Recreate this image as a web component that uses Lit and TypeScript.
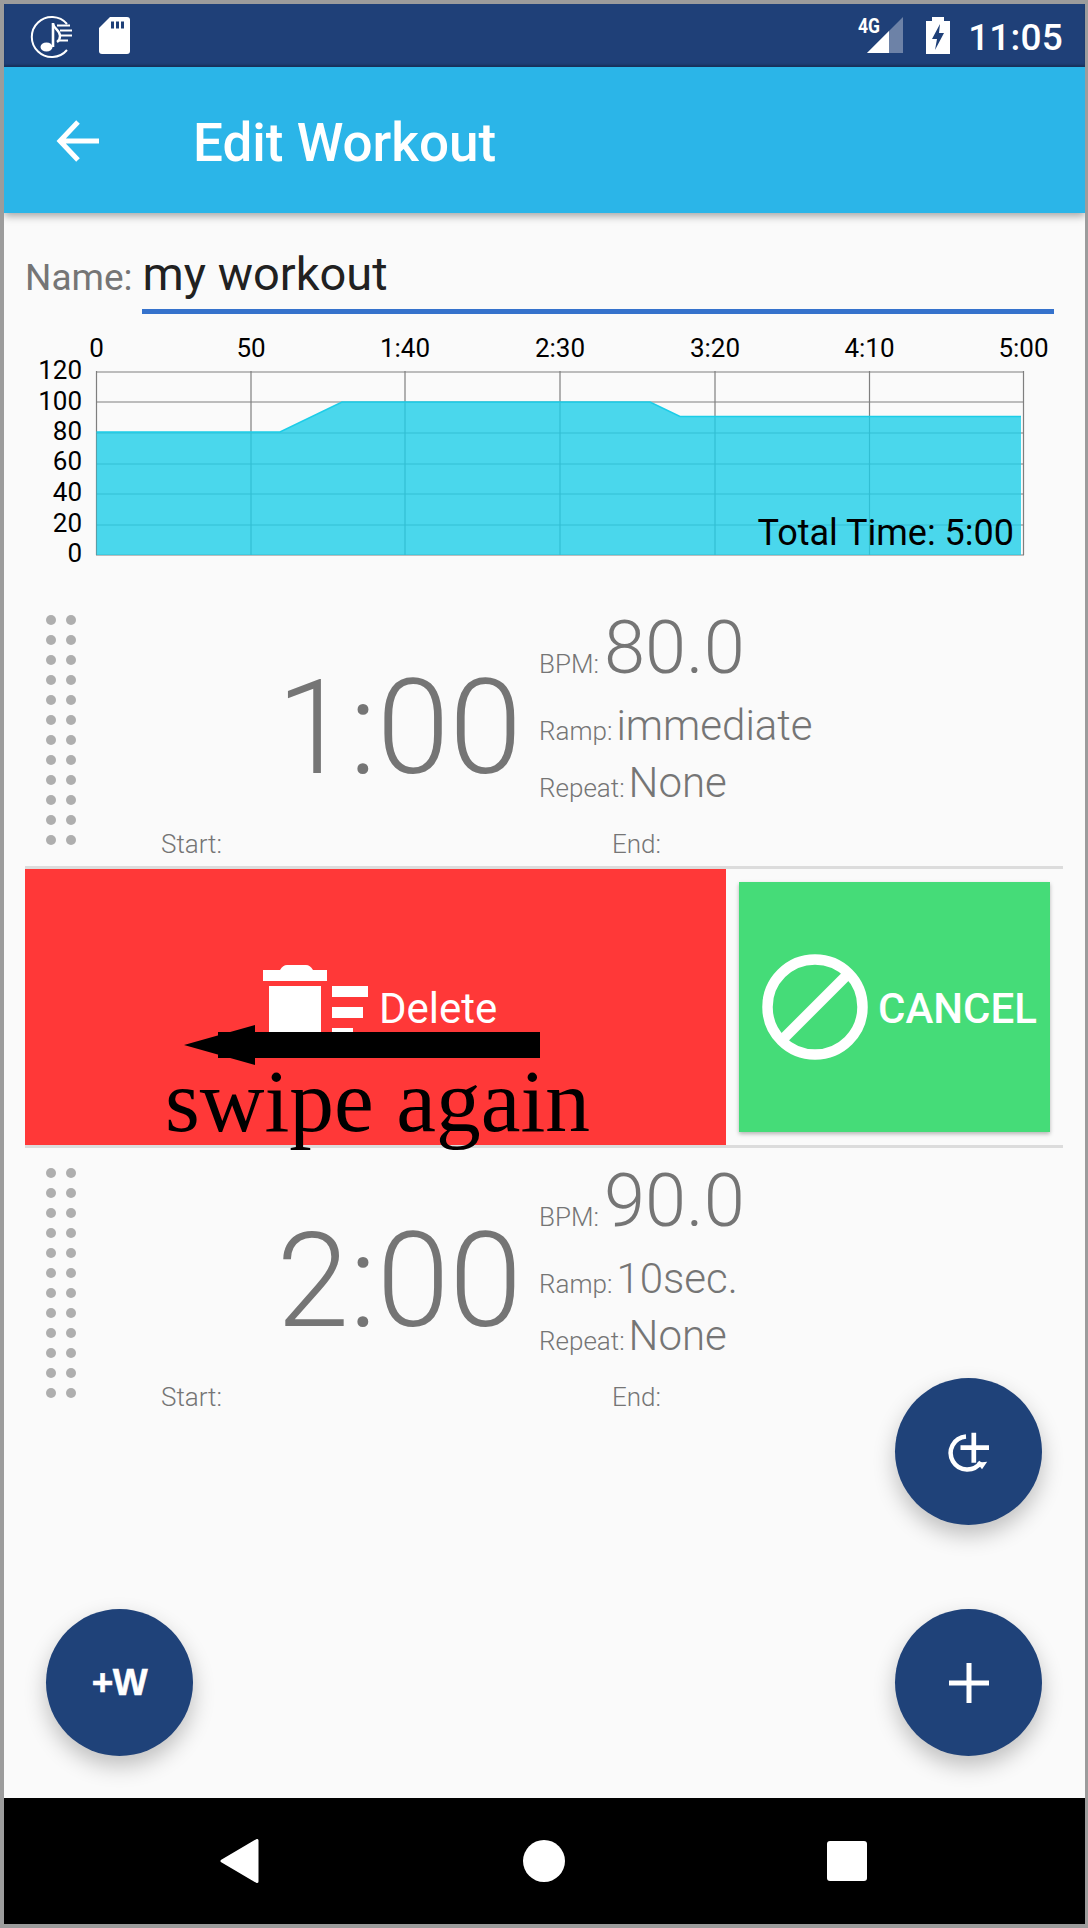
import { LitElement, html, css, svg } from "lit";
import { customElement } from "lit/decorators.js";

const GX = [96.5, 251, 405, 560, 715, 869.5, 1023.5];
const GY = [372, 402, 433, 464, 494, 525, 555];
const TOP = ["0", "50", "1:40", "2:30", "3:20", "4:10", "5:00"];
const LEFT: [string, number][] = [["120", 379], ["100", 410], ["80", 440], ["60", 470], ["40", 501], ["20", 532], ["0", 562]];

@customElement("workout-chart")
class WorkoutChart extends LitElement {
  static styles = css`
    :host { display: block; height: 260px; }
    svg { display: block; }
    text { font-family: Roboto, sans-serif; fill: #000; }
    .tick { font-size: 26px; }
    .total { font-size: 36px; }
  `;
  render() {
    return html`<svg width="1080" height="260" viewBox="4 320 1080 260">
      ${GX.map((x) => svg`<line x1=${x} x2=${x} y1="371" y2="555" stroke="#7f7f7f" stroke-width="1.2"></line>`)}
      ${GY.map((y) => svg`<line x1="96" x2="1024" y1=${y} y2=${y} stroke="#7f7f7f" stroke-width="1.2"></line>`)}
      <path d="M96.5 432H280L342 402H650L680 416.5H1021V555H96.5Z" fill="#1ecee9" fill-opacity=".8"></path>
      <path d="M96.5 432H280L342 402H650L680 416.5H1021" fill="none" stroke="#1ccde8" stroke-width="1.5"></path>
      ${TOP.map((t, i) => svg`<text class="tick" x=${GX[i]} y="357" text-anchor="middle">${t}</text>`)}
      ${LEFT.map(([t, y]) => svg`<text class="tick" x="82" y=${y} text-anchor="end">${t}</text>`)}
      <text class="total" x="1014" y="545" text-anchor="end">Total Time: 5:00</text>
    </svg>`;
  }
}

@customElement("interval-row")
class IntervalRow extends LitElement {
  static properties = { time: {}, bpm: {}, ramp: {}, repeat: {} };
  time = "";
  bpm = "";
  ramp = "";
  repeat = "";
  static styles = css`
    :host { display: flex; height: 266px; padding-left: 42px; font-family: Roboto, sans-serif; font-weight: 300; color: #757575; }
    .handle { display: grid; grid-template-columns: 10px 10px; grid-auto-rows: 10px; gap: 10px; margin-top: 15px; align-content: start; }
    .handle i { border-radius: 50%; background: #aeaeae; }
    .body { flex: 1; display: flex; flex-direction: column; }
    .top { display: flex; height: 230px; }
    .time { width: 446px; text-align: right; font-size: 131px; line-height: 131px; margin-top: 63px; }
    .details { margin-left: 17px; padding-top: 11px; }
    .line { display: flex; align-items: baseline; white-space: nowrap; }
    .line small { font-size: 26px; margin-right: 5px; }
    .big { font-size: 74px; line-height: 74px; }
    .mid { font-size: 42px; line-height: 50px; margin-left: -1px; }
    .l2 { margin-top: 16px; }
    .l3 { margin-top: 7px; }
    .foot { display: flex; font-size: 26px; line-height: 28px; }
    .foot span:first-child { width: 451px; margin-left: 85px; }
  `;
  render() {
    return html`
      <div class="handle">${Array.from({ length: 24 }, () => html`<i></i>`)}</div>
      <div class="body">
        <div class="top">
          <div class="time">${this.time}</div>
          <div class="details">
            <div class="line"><small>BPM:</small><span class="big">${this.bpm}</span></div>
            <div class="line l2"><small>Ramp:</small><span class="mid">${this.ramp}</span></div>
            <div class="line l3"><small>Repeat:</small><span class="mid">${this.repeat}</span></div>
          </div>
        </div>
        <div class="foot"><span>Start:</span><span>End:</span></div>
      </div>`;
  }
}

@customElement("app-root")
class AppRoot extends LitElement {
  static styles = css`
    :host { display: block; width: 1088px; height: 1928px; }
    .frame { position: relative; box-sizing: border-box; width: 1088px; height: 1928px; border: 4px solid #9c9c9c; border-right-width: 3px; background: #fafafa; display: flex; flex-direction: column; overflow: hidden; font-family: Roboto, sans-serif; }
    .status { height: 63px; flex: none; background: #1f4078; box-shadow: inset 0 -2px 2px rgba(0,0,0,.2); display: flex; align-items: center; color: #fff; }
    .status .music { margin-left: 26px; }
    .status .sd { margin-left: 25px; }
    .status .right { margin-left: auto; display: flex; align-items: center; }
    .status .clock { font-size: 37px; font-weight: 500; margin: 4px 22px 0 18px; letter-spacing: .2px; }
    .bar { height: 146px; flex: none; background: #2bb5e8; box-shadow: 0 3px 8px rgba(0,0,0,.35); display: flex; align-items: center; color: #fff; position: relative; z-index: 1; }
    .bar svg { margin: 2px 0 0 52px; }
    .bar h1 { margin: 0 0 0 94px; font-size: 53px; font-weight: 500; line-height: 60px; padding-top: 5px; }
    .main { flex: 1; min-height: 0; }
    .name { display: flex; align-items: baseline; padding: 34px 0 0 21px; height: 69px; box-sizing: content-box; }
    .name label { font-size: 37px; color: #757575; margin-right: 9px; }
    .name div { width: 912px; height: 67px; font-size: 47px; color: #212121; border-bottom: 5px solid #3572cc; padding-left: 1px; box-sizing: border-box; line-height: 54px; }
    workout-chart { margin-top: 4px; margin-bottom: 20px; }
    .rule { height: 3px; background: #dcdcdc; margin: 0 22px 0 21px; }
    .swipe { position: relative; display: flex; height: 276px; margin-left: 21px; }
    .red { width: 701px; background: #ff3838; color: #fff; position: relative; overflow: visible; }
    .del { display: flex; align-items: flex-start; padding: 96px 0 0 238px; font-size: 42px; }
    .del span { margin: 22px 0 0 10px; line-height: 44px; }
    .arrow { position: absolute; left: 159px; top: 156px; }
    .again { position: absolute; left: 140px; top: 182px; font-family: "Liberation Serif", serif; font-size: 89.500px; line-height: 100px; color: #000; white-space: nowrap; }
    .cancel { width: 311px; height: 250px; margin: 13px 0 0 13px; background: #45dc78; color: #fff; box-shadow: 0 2px 4px rgba(0,0,0,.28); display: flex; align-items: center; font-size: 42px; font-weight: 500; }
    .cancel svg { margin-left: 23px; }
    .cancel span { margin-left: 10px; padding-top: 3px; }
    .second { margin-top: 5px; }
    .fab { position: absolute; width: 147px; height: 147px; border-radius: 50%; background: #1f4279; color: #fff; box-shadow: 0 10px 22px rgba(0,0,0,.24); display: flex; align-items: center; justify-content: center; }
    .fab-a { left: 891px; top: 1374px; }
    .fab-b { left: 891px; top: 1605px; }
    .fab-c { left: 42px; top: 1605px; font-family: "Liberation Sans", sans-serif; font-weight: 700; font-size: 37px; letter-spacing: -.5px; -webkit-text-stroke: .5px #fff; }
    .nav { height: 126px; flex: none; background: #000; display: flex; align-items: center; position: relative; z-index: 2; }
    .nav svg { display: block; }
    .nav .n1 { margin-left: 216px; }
    .nav .n2 { margin-left: 263px; }
    .nav .n3 { margin-left: 262px; }
  `;
  render() {
    return html`<div class="frame">
      <div class="status">
        <svg class="music" width="44" height="46" viewBox="0 0 44 46" fill="none">
          <path d="M37 37A20 20 0 1 1 37 11" stroke="#fff" stroke-width="2"></path>
          <path d="M23 10V34" stroke="#fff" stroke-width="2.6"></path>
          <ellipse cx="16.500" cy="34" rx="6" ry="4.600" fill="#fff"></ellipse>
          <path d="M23 11C24 16 30 17 30 23C30 26 28.500 28 27 29" stroke="#fff" stroke-width="2.4"></path>
          <path d="M27 12.500H40M30 17.500H42M31 22.500H42M29 27.500H38" stroke="#fff" stroke-width="2"></path>
        </svg>
        <svg class="sd" width="31" height="37" viewBox="0 0 31 37">
          <path d="M11 0H28Q31 0 31 3V34Q31 37 28 37H3Q0 37 0 34V11Z" fill="#fff"></path>
          <path d="M12 4.500H15V11.500H12ZM17 4.500H20V11.500H17ZM22 4.500H25V11.500H22Z" fill="#1f4078"></path>
        </svg>
        <div class="right">
          <svg width="46" height="38" viewBox="0 0 46 38" style="overflow:visible">
            <text x="0" y="16" font-family="'Roboto'" font-size="20" font-weight="700" fill="#fff" textLength="22" lengthAdjust="spacingAndGlyphs">4G</text>
            <path d="M9 36L45 0V36Z" fill="#fff" fill-opacity=".35"></path>
            <path d="M9 36L31 14V36Z" fill="#fff"></path>
          </svg>
          <svg style="margin-left:22px" width="24" height="37" viewBox="0 0 24 37">
            <path d="M6 0H18V4H24V37H0V4H6Z" fill="#fff"></path>
            <path d="M14 7L6 22H11L9 33L18 16H13Z" fill="#1f4078"></path>
          </svg>
          <span class="clock">11:05</span>
        </div>
      </div>
      <div class="bar">
        <svg width="43" height="42" viewBox="0 0 43 42" fill="none" stroke="#fff" stroke-width="5">
          <path d="M43 21H4M22 2L4 21L22 40"></path>
        </svg>
        <h1>Edit Workout</h1>
      </div>
      <div class="main">
        <div class="name"><label>Name:</label><div>my workout</div></div>
        <workout-chart></workout-chart>
        <interval-row time="1:00" bpm="80.0" ramp="immediate" repeat="None"></interval-row>
        <div class="rule"></div>
        <div class="swipe">
          <div class="red">
            <div class="del">
              <svg width="106" height="76" viewBox="0 0 106 76" fill="#fff" style="flex:none">
                <path d="M0 5H17Q20 0 24 0H43Q47 0 50 5H64V16H0Z"></path>
                <path d="M6 21H58V76H6Z"></path>
                <path d="M69 21H105V32H69ZM69 42H100V53H69ZM69 63H90V74H69Z"></path>
              </svg>
              <span>Delete</span>
            </div>
            <svg class="arrow" width="357" height="40" viewBox="0 0 357 40"><path d="M0 20L71 0V7H356V33H71V40ZM34 7H71V33H34Z" fill="#000"></path></svg>
            <div class="again">swipe again</div>
          </div>
          <div class="cancel">
            <svg width="106" height="106" viewBox="0 0 106 106" fill="none" stroke="#fff" stroke-width="10.500">
              <circle cx="53" cy="53" r="47.500"></circle>
              <path d="M20 86L86 20"></path>
            </svg>
            <span>CANCEL</span>
          </div>
        </div>
        <div class="rule"></div>
        <interval-row class="second" time="2:00" bpm="90.0" ramp="10sec." repeat="None"></interval-row>
      </div>
      <div class="nav">
        <svg class="n1" width="40" height="44" viewBox="0 0 40 44"><path d="M2 22L37 1.500V42.500Z" fill="#fff" stroke="#fff" stroke-width="3" stroke-linejoin="round"></path></svg>
        <svg class="n2" width="42" height="42" viewBox="0 0 42 42"><circle cx="21" cy="21" r="21" fill="#fff"></circle></svg>
        <svg class="n3" width="40" height="40" viewBox="0 0 40 40"><rect width="40" height="40" rx="3" fill="#fff"></rect></svg>
      </div>
      <div class="fab fab-a">
        <svg width="48" height="48" viewBox="0 0 48 48" fill="none" stroke="#fff">
          <path d="M21 8.500A16.500 16.500 0 1 0 36 34" stroke-width="4.500"></path>
          <path d="M15.500 19.700H44M28.800 4.700V34.700" stroke-width="4.700"></path>
          <path d="M42.200 33.700L32 34.700L37 41.300Z" fill="#fff" stroke="none"></path>
        </svg>
      </div>
      <div class="fab fab-b">
        <svg width="40" height="40" viewBox="0 0 40 40" stroke="#fff" stroke-width="5"><path d="M0 20H40M20 0V40"></path></svg>
      </div>
      <div class="fab fab-c">+W</div>
    </div>`;
  }
}
